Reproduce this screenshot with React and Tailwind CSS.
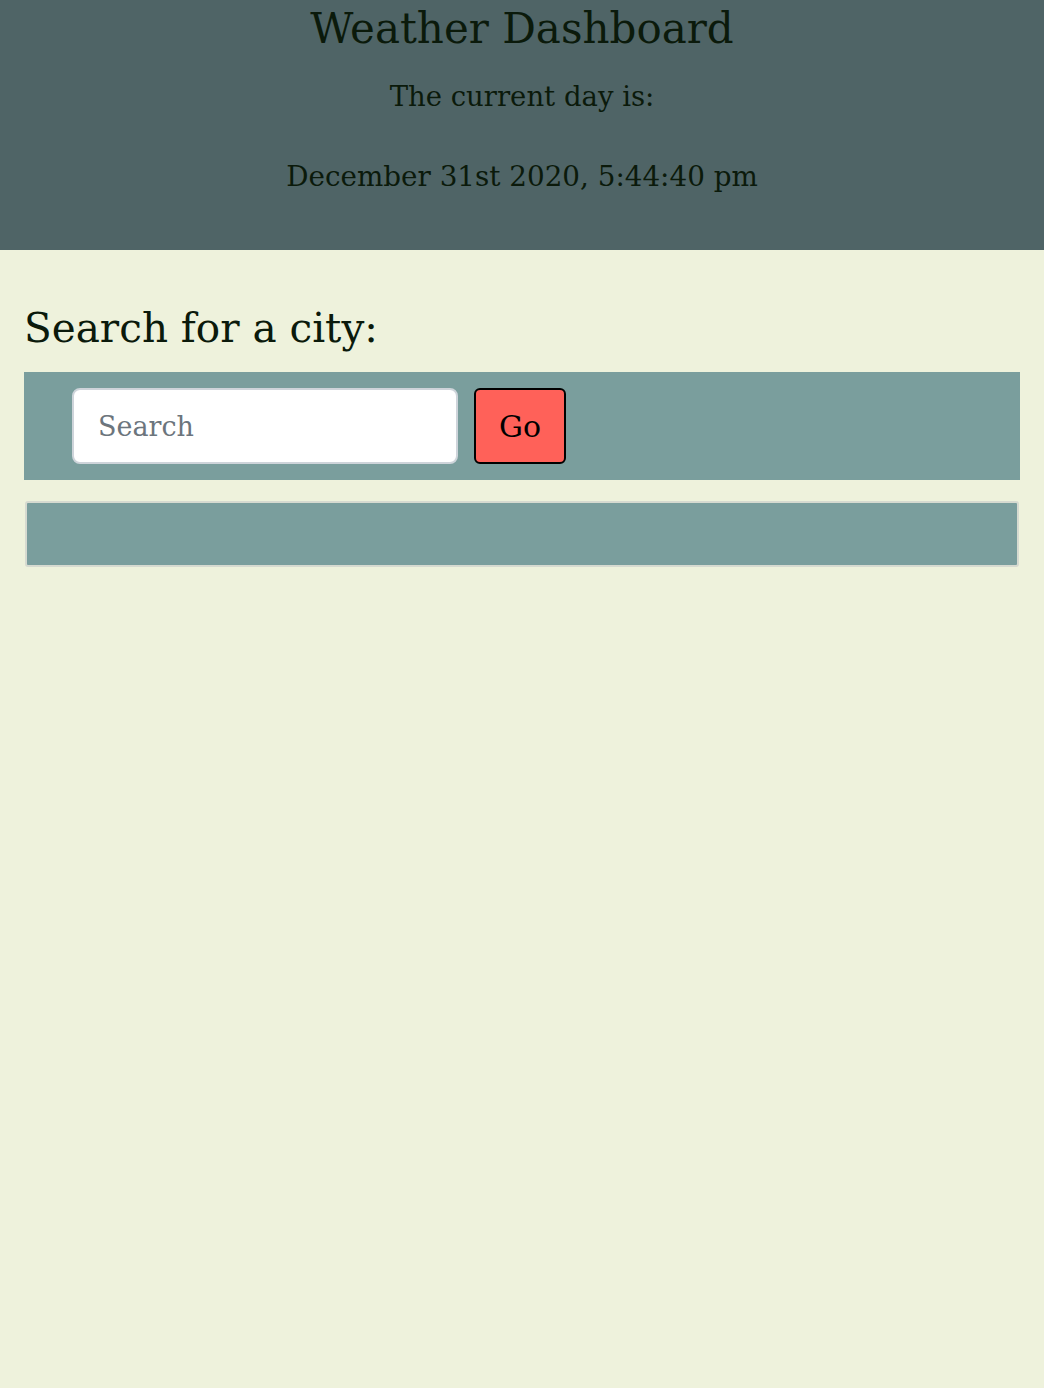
import React from 'react';

const serif = { fontFamily: '"DejaVu Serif", "Liberation Serif", serif' };

export default function App() {
  return (
    <div className="min-h-[1388px] bg-[#eef2dc] text-[#0b1a0b]" style={serif}>
      <header className="h-[250px] bg-[#4f6466] flex flex-col items-center text-center">
        <h1 className="text-[42px] leading-[54px] mt-[2px]">Weather Dashboard</h1>
        <p className="text-[27.5px] leading-[40px] mt-[20px]">The current day is:</p>
        <p className="text-[27.8px] leading-[40px] mt-[41px]">December 31st 2020, 5:44:40 pm</p>
      </header>

      <main className="px-6 pt-[50px]">
        <h2 className="text-[40.5px] leading-[56px] mb-[16px]">Search for a city:</h2>
        <div className="bg-[#7a9e9d] h-[108px] flex items-center gap-4 pl-12">
          <input
            type="text"
            placeholder="Search"
            className="w-[386px] h-[76px] rounded-lg border-2 border-[#ced4da] bg-white px-6 text-[27px] text-[#495057] placeholder:text-[#6c757d] outline-none"
            style={serif}
          />
          <button className="w-[92px] h-[76px] rounded-md border-2 border-black bg-[#ff6159] text-[30px] text-black">
            Go
          </button>
        </div>
        <div className="mt-[21px] mx-[1px] h-[66px] bg-[#7a9e9d] border-2 border-[#d6dad0] rounded-[3px]" />
      </main>
    </div>
  );
}
